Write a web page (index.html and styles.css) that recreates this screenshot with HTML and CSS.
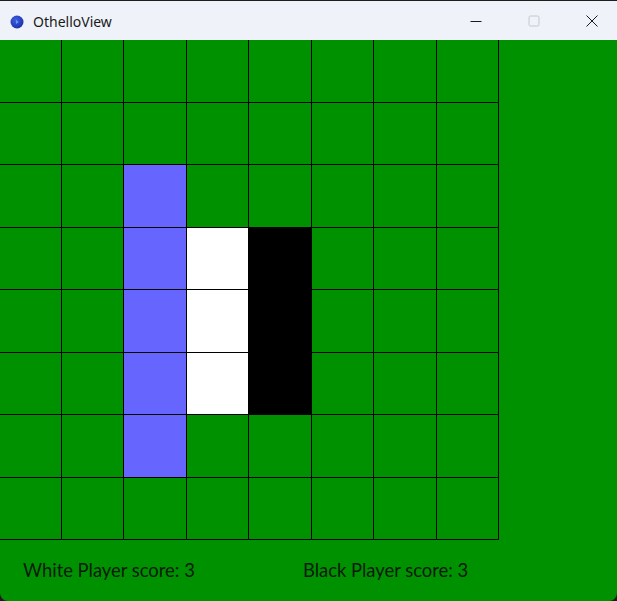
FILE: index.html
```html
<!DOCTYPE html>
<html>
<head>
<meta charset="utf-8">
<link rel="stylesheet" href="styles.css">
</head>
<body>
<div class="window">
  <div class="titlebar">
    <svg class="app-icon" width="14" height="14" viewBox="0 0 14 14">
      <defs>
        <radialGradient id="g" cx="0.4" cy="0.35" r="0.7">
          <stop offset="0" stop-color="#3f5fe0"/>
          <stop offset="1" stop-color="#1a2fa8"/>
        </radialGradient>
      </defs>
      <circle cx="7" cy="7" r="6.5" fill="url(#g)"/>
      <path d="M6 5 L8.6 7 L6 9 Z" fill="#5fa0ff"/>
    </svg>
    <span class="title">OthelloView</span>
    <div class="controls">
      <div class="ctrl"><svg width="12" height="12" viewBox="0 0 12 12"><path d="M0.5 6.5 H11.5" stroke="#1b1b1b" stroke-width="1"/></svg></div>
      <div class="ctrl"><svg width="12" height="12" viewBox="0 0 12 12"><rect x="1" y="1" width="10" height="10" rx="1.5" fill="none" stroke="#c4c6c9" stroke-width="1"/></svg></div>
      <div class="ctrl"><svg width="12" height="12" viewBox="0 0 12 12"><path d="M0.5 0.5 L11.5 11.5 M11.5 0.5 L0.5 11.5" stroke="#1b1b1b" stroke-width="1"/></svg></div>
    </div>
  </div>
  <div class="content">
    <div class="board">
      <div class="cell"></div><div class="cell"></div><div class="cell"></div><div class="cell"></div><div class="cell"></div><div class="cell"></div><div class="cell"></div><div class="cell"></div>
      <div class="cell"></div><div class="cell"></div><div class="cell"></div><div class="cell"></div><div class="cell"></div><div class="cell"></div><div class="cell"></div><div class="cell"></div>
      <div class="cell"></div><div class="cell"></div><div class="cell hint"></div><div class="cell"></div><div class="cell"></div><div class="cell"></div><div class="cell"></div><div class="cell"></div>
      <div class="cell"></div><div class="cell"></div><div class="cell hint"></div><div class="cell white"></div><div class="cell black"></div><div class="cell"></div><div class="cell"></div><div class="cell"></div>
      <div class="cell"></div><div class="cell"></div><div class="cell hint"></div><div class="cell white"></div><div class="cell black"></div><div class="cell"></div><div class="cell"></div><div class="cell"></div>
      <div class="cell"></div><div class="cell"></div><div class="cell hint"></div><div class="cell white"></div><div class="cell black"></div><div class="cell"></div><div class="cell"></div><div class="cell"></div>
      <div class="cell"></div><div class="cell"></div><div class="cell hint"></div><div class="cell"></div><div class="cell"></div><div class="cell"></div><div class="cell"></div><div class="cell"></div>
      <div class="cell"></div><div class="cell"></div><div class="cell"></div><div class="cell"></div><div class="cell"></div><div class="cell"></div><div class="cell"></div><div class="cell"></div>
    </div>
    <div class="scores">
      <div class="score first">White Player score: 3</div>
      <div class="score">Black Player score: 3</div>
    </div>
  </div>
</div>
</body>
</html>
```
FILE: styles.css
```css
* { box-sizing: border-box; }
html, body {
  margin: 0;
  padding: 0;
  background: #1c1c1c;
  width: 617px;
  height: 601px;
  overflow: hidden;
}
.window {
  width: 617px;
  height: 601px;
  display: flex;
  flex-direction: column;
  border-top: 1px solid #1f1f1f;
  border-radius: 0 0 8px 8px;
  overflow: hidden;
}
.titlebar {
  height: 39px;
  background: #eff3f9;
  display: flex;
  align-items: center;
  flex: none;
}
.app-icon {
  margin-left: 10px;
  margin-top: 2px;
}
.title {
  margin-left: 9px;
  font-family: "Noto Sans", sans-serif;
  font-size: 14px;
  color: #1a1a1a;
  margin-top: 1px;
}
.controls {
  margin-left: auto;
  margin-right: -4px;
  display: flex;
  height: 100%;
}
.ctrl {
  width: 58px;
  height: 100%;
  display: flex;
  align-items: center;
  justify-content: center;
}
.content {
  flex: 1;
  background: #009100;
  display: flex;
  flex-direction: column;
}
.board {
  display: grid;
  grid-template-columns: 62px 62px 63px 62px 63px 62px 63px 62px;
  grid-template-rows: 63px 62px 63px 62px 63px 62px 63px 62px;
  width: 499px;
}
.cell {
  border-right: 1px solid #000;
  border-bottom: 1px solid #000;
}
.hint { background: #6666ff; }
.white { background: #ffffff; }
.black { background: #000000; }
.scores {
  display: flex;
  padding-left: 23px;
  padding-top: 19px;
}
.score {
  font-family: "Lato", sans-serif;
  font-size: 18.4px;
  color: #0a1a0a;
  line-height: 22px;
}
.first { width: 280px; }
```
